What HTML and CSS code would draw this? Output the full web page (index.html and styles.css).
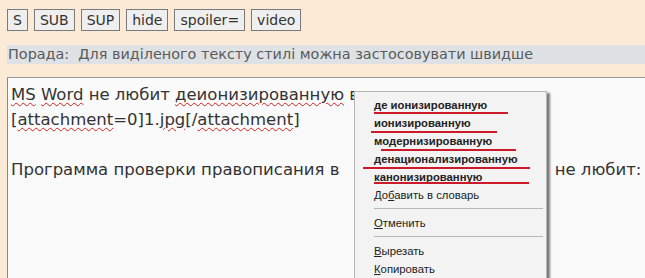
FILE: index.html
```html
<!DOCTYPE html>
<html lang="uk">
<head>
    <meta charset="UTF-8">
    <title>Spell check menu</title>
    <link rel="stylesheet" href="styles.css">
</head>
<body>

<div class="toolbar">
    <button class="tag-btn">S</button>
    <button class="tag-btn">SUB</button>
    <button class="tag-btn">SUP</button>
    <button class="tag-btn">hide</button>
    <button class="tag-btn">spoiler=</button>
    <button class="tag-btn">video</button>
</div>

<div class="hint">Порада:&nbsp; Для виділеного тексту стилі можна застосовувати швидше</div>

<div class="editor">
    <div class="editor-text">
        <span class="typo">MS</span> <span class="typo">Word</span> не любит <span class="typo">деионизированную</span> воду<br>
        [<span class="typo">attachment</span>=0]1.<span class="typo">jpg</span>[/<span class="typo">attachment</span>]<br>
        <br>
        Программа проверки правописания в <span class="covered"></span>не любит:
    </div>

    <div class="context-menu">
        <div class="menu-item bold">де ионизированную</div>
        <div class="menu-item bold">ионизированную</div>
        <div class="menu-item bold">модернизированную</div>
        <div class="menu-item bold">денационализированную</div>
        <div class="menu-item bold">канонизированную</div>
        <div class="menu-item">До<u>б</u>авить в словарь</div>
        <div class="menu-sep"></div>
        <div class="menu-item"><u>О</u>тменить</div>
        <div class="menu-sep"></div>
        <div class="menu-item"><u>В</u>ырезать</div>
        <div class="menu-item"><u>К</u>опировать</div>

        <!-- red pen marks under the suggestions -->
        <div class="pen-mark mark-1"></div>
        <div class="pen-mark mark-2"></div>
        <div class="pen-mark mark-3"></div>
        <div class="pen-mark mark-4"></div>
        <div class="pen-mark mark-5"></div>
    </div>
</div>

</body>
</html>
```

FILE: styles.css
```css
body {
    margin: 0;
    padding: 0;
    background-color: #fbead6;
    font-family: "DejaVu Sans", Verdana, sans-serif;
    overflow: hidden;
}
.toolbar {
    display: flex;
    gap: 6px;
    padding: 9px 7px 0;
}
.tag-btn {
    height: 22px;
    padding: 0 5px;
    border: 1px solid #7a7a7a;
    background-color: #efefef;
    color: #333;
    font-family: "DejaVu Sans", Verdana, sans-serif;
    font-size: 14px;
    line-height: 20px;
}
.hint {
    margin: 14px 0 0 7px;
    height: 19px;
    padding-left: 1px;
    background-color: #dfe2e5;
    color: #5a5a5a;
    font-size: 14.4px;
    line-height: 19px;
}
.editor {
    position: relative;
    margin: 13px -20px 0 7px;
    height: 240px;
    background-color: #fafafa;
    border-top: 1px solid #9a9a9a;
    border-left: 1px solid #8a8a8a;
}
.editor-text {
    padding: 4px 3px;
    color: #333;
    font-size: 16.5px;
    line-height: 25px;
}
.typo {
    text-decoration: underline wavy #d02020;
    text-decoration-thickness: 1px;
    text-underline-offset: 2px;
}
/* the part of the line hidden under the menu */
.covered {
    display: inline-block;
    width: 210px;
}
.context-menu {
    position: absolute;
    left: 346px;
    top: 13px;
    width: 191px;
    height: 240px;
    padding-top: 4px;
    background-color: #f3f3f3;
    border: 1px solid #b5b5b5;
    box-shadow: 3px 2px 2px #7d7d7d;
    font-family: "Liberation Sans", Arial, sans-serif;
    font-size: 11.3px;
    color: #222;
}
.menu-item {
    height: 18px;
    line-height: 18px;
    padding-left: 19px;
}
.menu-item.bold {
    font-weight: bold;
}
.menu-sep {
    height: 1px;
    margin: 4px 3px 5px 19px;
    background-color: #b8b8b8;
}
.pen-mark {
    position: absolute;
    height: 2px;
    background-color: #cc1a2a;
}
.mark-1 { left: 19px; top: 20px; width: 134px; }
.mark-2 { left: 16px; top: 39px; width: 126px; }
.mark-3 { left: 26px; top: 57px; width: 135px; }
.mark-4 { left: 8px; top: 75px; width: 167px; }
.mark-5 { left: 19px; top: 90px; width: 155px; }
```
